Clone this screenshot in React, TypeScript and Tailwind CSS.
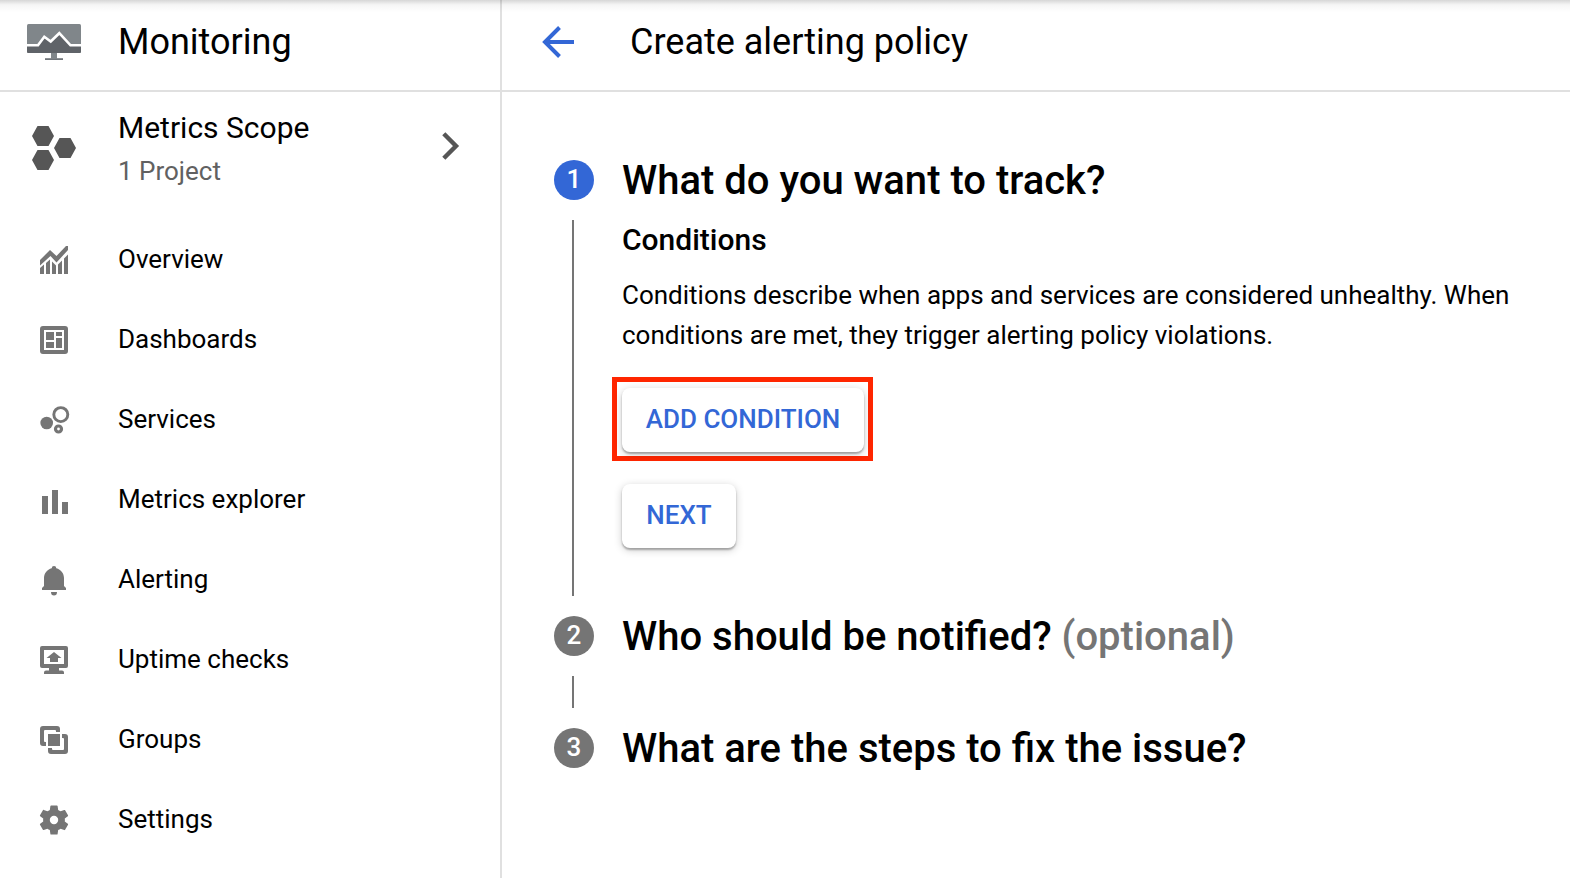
import React from "react";

type IconProps = { children: React.ReactNode };

// 28x28 drawing area with a small margin for shapes that overshoot it
function Glyph({ children }: IconProps) {
  return (
    <svg viewBox="-2 -2 32 32" className="h-8 w-8 shrink-0 fill-[#757575]">
      {children}
    </svg>
  );
}

const items: { label: string; icon: React.ReactNode }[] = [
  {
    label: "Overview",
    icon: (
      <path d="M0 14 10 4l6.500 6L26 0h2v4L16.500 16.500 10.500 10 0 19.500zM0 22l4-3.500V28H0zM6 17l4-3.500V28H6zM12 15.500l4 4V28h-4zM18 18.500l4-4V28h-4zM24 12.500l4-4V28h-4z" />
    ),
  },
  {
    label: "Dashboards",
    icon: (
      <path
        fillRule="evenodd"
        d="M3 0h22a3 3 0 0 1 3 3v22a3 3 0 0 1-3 3H3a3 3 0 0 1-3-3V3a3 3 0 0 1 3-3zM4 4v20h20V4zM6 6h8v8H6zM16 6h6v4h-6zM16 12h6v10h-6zM6 16h8v6H6z"
      />
    ),
  },
  {
    label: "Services",
    icon: (
      <>
        <circle cx="6.700" cy="17" r="6.300" />
        <circle cx="20.800" cy="8.600" r="7" fill="none" stroke="#757575" strokeWidth="2.900" />
        <circle cx="18.500" cy="23" r="3" fill="none" stroke="#757575" strokeWidth="3.200" />
      </>
    ),
  },
  { label: "Metrics explorer", icon: <path d="M2 10h6v18H2zM12 4h6v24h-6zM22 16h6v12h-6z" /> },
  {
    label: "Alerting",
    icon: (
      <path d="M14 0a2.300 2.300 0 0 1 2.300 2.200C21 3.500 24 7.500 24 12v8l2 2v2H2v-2l2-2v-8C4 7.500 7 3.500 11.700 2.200A2.300 2.300 0 0 1 14 0zM11 26h6a3 3.500 0 0 1-6 0z" />
    ),
  },
  {
    label: "Uptime checks",
    icon: (
      <path
        fillRule="evenodd"
        d="M2 0h24a2 2 0 0 1 2 2v18a2 2 0 0 1-2 2h-7v2.500h3a2 2 0 0 1 2 2V28H4v-1.500a2 2 0 0 1 2-2h3V22H2a2 2 0 0 1-2-2V2a2 2 0 0 1 2-2zM4 4v14h20V4zM14 6l7.500 6H18v4h-8v-4H6.500z"
      />
    ),
  },
  {
    label: "Groups",
    icon: (
      <path d="M3 0h14a3 3 0 0 1 3 3v3h-4V5a1 1 0 0 0-1-1H5a1 1 0 0 0-1 1v10a1 1 0 0 0 1 1h1v4H3a3 3 0 0 1-3-3V3a3 3 0 0 1 3-3zM8 8h12v12H8zM22 8h3a3 3 0 0 1 3 3v14a3 3 0 0 1-3 3H11a3 3 0 0 1-3-3v-3h4v1a1 1 0 0 0 1 1h10a1 1 0 0 0 1-1V13a1 1 0 0 0-1-1h-1z" />
    ),
  },
  {
    label: "Settings",
    icon: (
      <path
        transform="translate(-3.400 -3.400) scale(1.450)"
        d="M19.430 12.980c.04-.32.07-.64.07-.98s-.03-.66-.07-.98l2.110-1.650c.19-.15.24-.42.12-.64l-2-3.460c-.12-.22-.39-.3-.61-.22l-2.490 1c-.52-.4-1.080-.73-1.690-.98l-.38-2.650C14.460 2.180 14.250 2 14 2h-4c-.25 0-.46.18-.49.42l-.38 2.650c-.61.25-1.170.59-1.690.98l-2.490-1c-.23-.09-.49 0-.61.22l-2 3.460c-.13.22-.07.49.12.64l2.110 1.650c-.04.32-.07.65-.07.98s.03.66.07.98l-2.110 1.650c-.19.15-.24.42-.12.64l2 3.460c.12.22.39.3.61.22l2.490-1c.52.4 1.080.73 1.690.98l.38 2.650c.03.24.24.42.49.42h4c.25 0 .46-.18.49-.42l.38-2.650c.61-.25 1.170-.59 1.690-.98l2.490 1c.23.09.49 0 .61-.22l2-3.460c.12-.22.07-.49-.12-.64zM12 14.900a2.900 2.900 0 1 1 0-5.800 2.900 2.900 0 0 1 0 5.800z"
      />
    ),
  },
];

function Step({ n, active = false, last = false, title, children }: { n: number; active?: boolean; last?: boolean; title: React.ReactNode; children?: React.ReactNode }) {
  return (
    <section className="flex">
      <div className="flex w-10 shrink-0 flex-col items-center">
        <div className={(active ? "bg-[#3367d6]" : "bg-[#757575]") + " flex h-10 w-10 justify-center rounded-full text-[26px] leading-[38px] font-medium text-white"}>
          {n}
        </div>
        {!last && <div className="my-5 mr-0.5 min-h-8 w-0.5 flex-1 bg-[#757575]" />}
      </div>
      <div className="ml-7 flex-1">
        <h2 className="h-10 text-[40px] leading-[42px] font-medium whitespace-nowrap">{title}</h2>
        {children}
      </div>
    </section>
  );
}

const button =
  "flex h-16 justify-center rounded-lg bg-white text-[26px] leading-[62px] font-medium whitespace-nowrap text-[#3367d6] shadow-[0_2px_2px_rgba(0,0,0,0.28),0_2px_8px_rgba(0,0,0,0.2)]";

export default function App() {
  return (
    <div className="relative flex h-[878px] w-[1570px] overflow-hidden bg-white font-['Roboto',sans-serif] text-black">
      <aside className="w-[502px] shrink-0 border-r-2 border-[#e0e0e0]">
        <div className="flex h-[92px] items-center border-b-2 border-[#e0e0e0] pb-1.5 pl-[27px]">
          <svg viewBox="0 0 54 36" className="h-9 w-[54px]">
            <rect width="54" height="29" rx="1.500" fill="#80868a" />
            <path d="M0 21.300h11l6.300-8.500 6.400 4.700 8.600-8.300L43.500 21.300H54v6.200A1.500 1.500 0 0 1 52.500 29h-51A1.500 1.500 0 0 1 0 27.500z" fill="#5f6368" />
            <path d="M0 21.300h11l6.300-8.500 6.400 4.700 8.600-8.300L43.500 21.300H54" fill="none" stroke="#fff" strokeWidth="2.600" />
            <path d="M24 29h6v5.500h-6z" fill="#80868a" />
            <path d="M18 34.200h18V36H18z" fill="#70757a" />
          </svg>
          <h1 className="ml-[37px] text-[36px] leading-10">Monitoring</h1>
        </div>
        <div className="flex h-[127px] pl-8">
          <svg viewBox="0 0 44 44" className="mt-[34px] h-11 w-11 fill-[#565656]">
            <path d="M5.500 0h11L22 10l-5.500 10h-11L0 10zM5.500 24h11L22 34l-5.500 10h-11L0 34zM27.500 12h11L44 22l-5.500 10h-11L22 22z" />
          </svg>
          <div className="mt-4 ml-[42px] flex-1">
            <div className="text-[30px] leading-10">Metrics Scope</div>
            <div className="mt-[3px] text-[26px] leading-10 text-[#616161]">1 Project</div>
          </div>
          <svg viewBox="0 0 18 28" className="mt-10 mr-10 h-7 w-[18px]">
            <path d="M1.800 1.800 14 14 1.800 26.200" fill="none" stroke="#565656" strokeWidth="4.400" />
          </svg>
        </div>
        <nav>
          {items.map((item) => (
            <a key={item.label} className="flex h-20 items-center pl-[38px]">
              <span className="mt-0.5 flex">
                <Glyph>{item.icon}</Glyph>
              </span>
              <span className="ml-12 text-[26px] leading-10">{item.label}</span>
            </a>
          ))}
        </nav>
      </aside>
      <main className="flex-1">
        <header className="flex h-[92px] items-center border-b-2 border-[#e0e0e0] pb-1.5 pl-10">
          <svg viewBox="0 0 32 32" className="h-8 w-8">
            <path d="M32 16H3M17.500 1.500 3 16l14.500 14.500" fill="none" stroke="#3367d6" strokeWidth="4" />
          </svg>
          <h1 className="ml-14 text-[36px] leading-10">Create alerting policy</h1>
        </header>
        <div className="pt-[68px] pl-[52px]">
          <Step n={1} active title="What do you want to track?">
            <h3 className="mt-5 text-[30px] leading-10 font-medium">Conditions</h3>
            <p className="mt-[15px] text-[26px] leading-10 whitespace-nowrap">
              Conditions describe when apps and services are considered unhealthy. When
              <br />
              conditions are met, they trigger alerting policy violations.
            </p>
            <div className="mt-[22px] -ml-2.5 flex w-[261px] border-5 border-[#ff2600] pt-1.5 pb-1 pl-[5px]">
              <button className={button + " w-[242px]"}>ADD CONDITION</button>
            </div>
            <button className={button + " mt-[23px] mb-[68px] w-[114px]"}>NEXT</button>
          </Step>
          <Step
            n={2}
            title={
              <>
                Who should be notified? <span className="text-[#757575]">(optional)</span>
              </>
            }
          />
          <Step n={3} last title="What are the steps to fix the issue?" />
        </div>
      </main>
      <div className="pointer-events-none absolute inset-x-0 top-0 h-3 bg-linear-to-b from-black/16 via-black/4 via-40% to-transparent" />
    </div>
  );
}
